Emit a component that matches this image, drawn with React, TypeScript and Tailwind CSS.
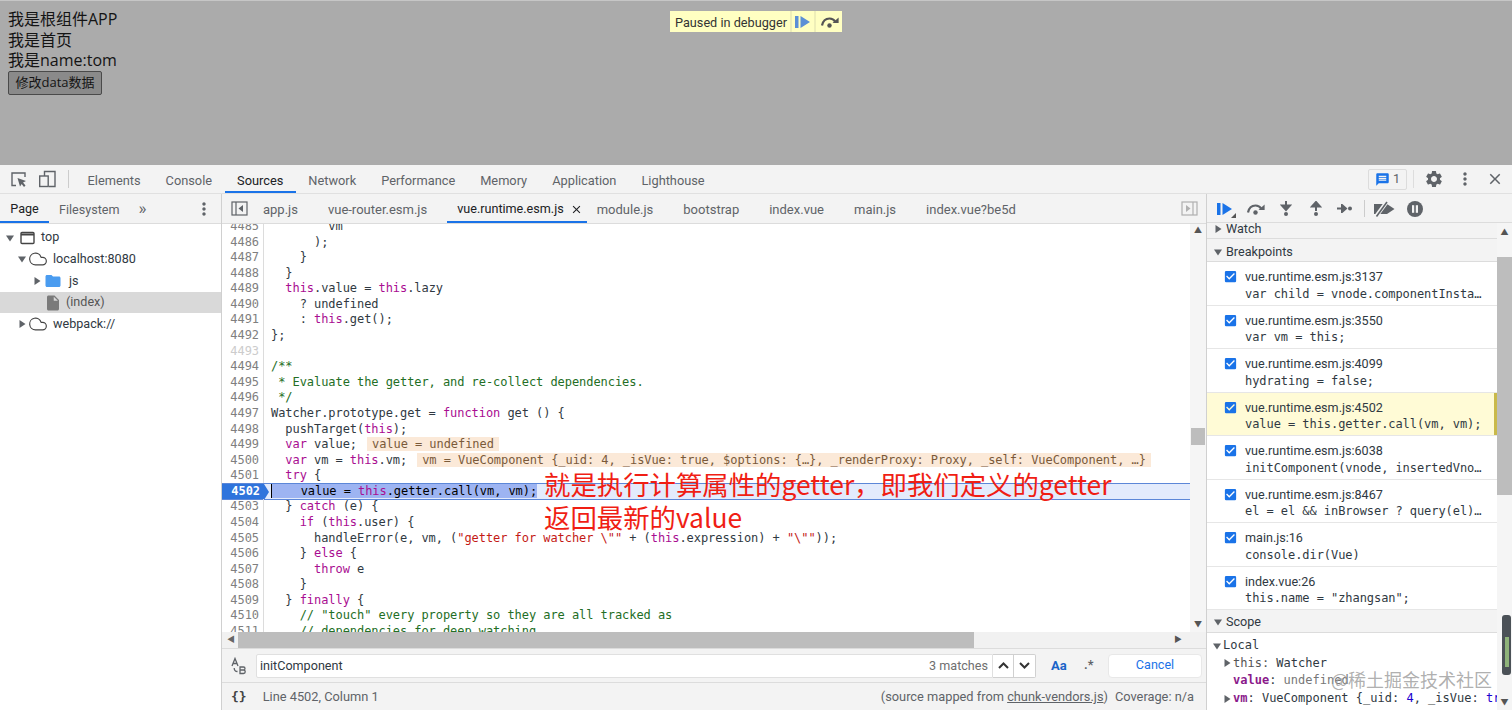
import React from "react";
import { MdSettings, MdMoreVert, MdClose, MdFolder, MdInsertDriveFile, MdMessage, MdCheckBox } from "react-icons/md";
import { Cloud } from "lucide-react";

const ui = "font-['Roboto','Noto_Sans_CJK_SC',sans-serif]";
const mono = "font-['DejaVu_Sans_Mono',monospace]";

type T = [string, string?];
const K = "text-[#a90d91]";
const C = "text-[#236e25]";
const S = "text-[#c41a16]";

const code: [number, T[]][] = [
  [4485, [["        vm"]]],
  [4486, [["      );"]]],
  [4487, [["    }"]]],
  [4488, [["  }"]]],
  [4489, [["  "], ["this", K], [".value = "], ["this", K], [".lazy"]]],
  [4490, [["    ? undefined"]]],
  [4491, [["    : "], ["this", K], [".get();"]]],
  [4492, [["};"]]],
  [4493, [[""]]],
  [4494, [["/**", C]]],
  [4495, [[" * Evaluate the getter, and re-collect dependencies.", C]]],
  [4496, [[" */", C]]],
  [4497, [["Watcher.prototype.get = "], ["function", K], [" get () {"]]],
  [4498, [["  pushTarget("], ["this", K], [");"]]],
  [4499, [["  "], ["var", K], [" value;"]]],
  [4500, [["  "], ["var", K], [" vm = "], ["this", K], [".vm;"]]],
  [4501, [["  "], ["try", K], [" {"]]],
  [4502, [["    value = "], ["this", K], [".getter.call(vm, vm);"]]],
  [4503, [["  } "], ["catch", K], [" (e) {"]]],
  [4504, [["    "], ["if", K], [" ("], ["this", K], [".user) {"]]],
  [4505, [["      handleError(e, vm, ("], ["\"getter for watcher \\\"\"", S], [" + ("], ["this", K], [".expression) + "], ["\"\\\"\"", S], ["));"]]],
  [4506, [["    } "], ["else", K], [" {"]]],
  [4507, [["      "], ["throw", K], [" e"]]],
  [4508, [["    }"]]],
  [4509, [["  } "], ["finally", K], [" {"]]],
  [4510, [["    // \"touch\" every property so they are all tracked as", C]]],
  [4511, [["    // dependencies for deep watching", C]]],
];

const Tri = ({ down, className = "" }: { down?: boolean; className?: string }) => (
  <svg width="8" height="8" viewBox="0 0 8 8" className={`shrink-0 ${className}`}>
    <path d={down ? "M0 1.5H8L4 7.5Z" : "M1.5 0V8L7.5 4Z"} fill="#5f6368" />
  </svg>
);

const Tab = ({ label, active }: { label: string; active?: boolean }) => (
  <div className={`h-full flex items-center px-[12.5px] pt-[6px] text-[12.8px] border-b-2 ${active ? "border-[#1a73e8] text-[#202124]" : "border-transparent text-[#5f6368]"}`}>{label}</div>
);

const FileTab = ({ label, active }: { label: string; active?: boolean }) => (
  <div className={`h-full flex items-center shrink-0 pt-[4px] border-b-2 ${active ? "border-[#1a73e8] text-[#202124] text-[12.6px] pl-[10px] pr-[4px] gap-[6px] -mr-[10px]" : "border-transparent text-[#5f6368] px-[10px]"}`}>
    {label}
    {active && <MdClose size={13} className="text-[#202124]" />}
  </div>
);

const Resume = ({ c = "#1a73e8" }: { c?: string }) => (
  <svg width="16" height="14" viewBox="0 0 16 14"><path d="M0 1H3.5V13H0ZM5.5 1L15 7L5.5 13Z" fill={c} /></svg>
);
const StepOver = ({ c = "#5f6368" }: { c?: string }) => (
  <svg width="19" height="12" viewBox="0 0 19 12"><path d="M2 9.5C3 4.5 6.5 2.5 9.5 2.5C12 2.5 14 3.6 15.2 5.6" fill="none" stroke={c} strokeWidth="2.2" /><path d="M12.5 7H18.6V1.5Z" fill={c} /><circle cx="9.5" cy="9.5" r="2.2" fill={c} /></svg>
);

const bps: [string, string, boolean?][] = [
  ["vue.runtime.esm.js:3137", "var child = vnode.componentInsta…"],
  ["vue.runtime.esm.js:3550", "var vm = this;"],
  ["vue.runtime.esm.js:4099", "hydrating = false;"],
  ["vue.runtime.esm.js:4502", "value = this.getter.call(vm, vm);", true],
  ["vue.runtime.esm.js:6038", "initComponent(vnode, insertedVno…"],
  ["vue.runtime.esm.js:8467", "el = el && inBrowser ? query(el)…"],
  ["main.js:16", "console.dir(Vue)"],
  ["index.vue:26", 'this.name = "zhangsan";'],
];

const Row = ({ children, cls = "" }: { children: React.ReactNode; cls?: string }) => (
  <div className={`h-[21.6px] flex items-center whitespace-nowrap ${cls}`}>{children}</div>
);

export default function App() {
  return (
    <div className={`w-[1512px] h-[710px] overflow-hidden flex flex-col bg-white text-[12.6px] ${ui}`}>
      {/* Page */}
      <div className="h-[165px] shrink-0 bg-[#ababab] border-t border-[#c6c6c6] relative pl-2 pt-[8px] text-[16px] leading-[20.6px] text-[#141414] font-['Open_Sans','Noto_Sans_CJK_SC',sans-serif]">
        <div>我是根组件APP</div>
        <div>我是首页</div>
        <div>我是name:tom</div>
        <button className="w-[94px] h-[24px] bg-[#8a8a8a] border border-[#4a4a4a] rounded-[2px] text-[13px] text-[#141414] flex items-center justify-center">修改data数据</button>
        <div className={`absolute left-[670px] top-[10px] h-[21px] w-[172px] bg-[#ffffc2] flex items-center text-[12.7px] text-[#333] ${ui}`}>
          <span className="w-[120px] pl-[5px] pt-[3px] whitespace-nowrap">Paused in debugger</span>
          <span className="w-[26px] h-full border-x-2 border-[#eeeeb8] flex items-center justify-center"><Resume c="#5b8fd6" /></span>
          <span className="w-[26px] h-full flex items-center justify-center"><StepOver c="#555" /></span>
        </div>
      </div>

      {/* Main tab bar */}
      <div className="h-[29px] shrink-0 bg-[#f3f3f3] border-b border-[#e0e0e0] flex items-center">
        <div className="w-[68px] h-full flex items-center pl-[11px] gap-[13px] shrink-0">
          <svg width="15" height="15" viewBox="0 0 15 15" fill="none"><path d="M5 13.5H1V1H14V5" stroke="#5f6368" strokeWidth="1.4" /><path d="M6.5 6L15 9L12 10.5L14.5 13.5L13 15L10.7 12L9 14.5Z" fill="#5f6368" /></svg>
          <svg width="17" height="18" viewBox="0 0 17 18" fill="none"><path d="M5.5 6V1.5H16V16.5H10" stroke="#5f6368" strokeWidth="1.4" /><rect x="0.7" y="6" width="8.5" height="10.5" stroke="#5f6368" strokeWidth="1.4" /></svg>
        </div>
        <div className="w-px h-[18px] bg-[#ccc] shrink-0 mr-[6px]" />
        <Tab label="Elements" />
        <Tab label="Console" />
        <Tab label="Sources" active />
        <Tab label="Network" />
        <Tab label="Performance" />
        <Tab label="Memory" />
        <Tab label="Application" />
        <Tab label="Lighthouse" />
        <div className="ml-auto flex items-center h-full shrink-0">
          <div className="w-[39px] h-[21px] border border-[#dcdcdc] rounded-[2px] flex items-center justify-center gap-[3px] text-[#5f6368]">
            <MdMessage size={15} className="text-[#1a73e8]" /> 1
          </div>
          <div className="w-px h-[18px] bg-[#ddd] mx-[6px]" />
          <MdSettings size={20} className="text-[#5f6368] ml-[4px]" />
          <MdMoreVert size={20} className="text-[#5f6368] ml-[11px]" />
          <MdClose size={18} className="text-[#5f6368] ml-[11px] mr-[8px]" />
        </div>
      </div>

      {/* Body */}
      <div className="flex-1 min-h-0 flex">
        {/* Navigator */}
        <div className="w-[222px] shrink-0 border-r border-[#d0d0d0] flex flex-col">
          <div className="h-[30px] shrink-0 bg-[#f3f3f3] border-b border-[#dcdcdc] flex items-center relative text-[#5f6368]">
            <div className="w-[49px] h-full flex items-center justify-center pt-[3px] border-b-2 border-[#1a73e8] text-[#202124]">Page</div>
            <span className="ml-[10px] pt-[3px]">Filesystem</span>
            <span className="ml-[19px] text-[17px]">»</span>
            <MdMoreVert size={20} className="ml-auto mr-[7px] mt-[1px]" />
          </div>
          <div className="pt-[3px] text-[#303942]">
            <Row cls="pl-[6px]"><Tri down /><svg width="16" height="14" viewBox="0 0 16 14" fill="none" className="ml-[6px]"><rect x="1" y="1.5" width="13" height="11" rx="1" stroke="#444" strokeWidth="1.4" /><path d="M1 3.5H14" stroke="#444" strokeWidth="2" /></svg><span className="ml-[5px]">top</span></Row>
            <Row cls="pl-[18px]"><Tri down /><Cloud size={20} strokeWidth={1.4} className="text-[#444] ml-[2px]" /><span className="ml-[5px]">localhost:8080</span></Row>
            <Row cls="pl-[33px]"><Tri /><MdFolder size={18} className="text-[#4a9cf0] ml-[3px]" /><span className="ml-[7px]">js</span></Row>
            <Row cls="pl-[44px] bg-[#d9d9d9]"><MdInsertDriveFile size={18} className="text-[#7a7a7a]" /><span className="ml-[4px] text-[#555]">(index)</span></Row>
            <Row cls="pl-[18px]"><Tri /><Cloud size={20} strokeWidth={1.4} className="text-[#444] ml-[2px]" /><span className="ml-[5px]">webpack://</span></Row>
          </div>
        </div>

        {/* Editor */}
        <div className="w-[985px] shrink-0 border-r border-[#d0d0d0] flex flex-col min-w-0">
          <div className="h-[30px] shrink-0 bg-[#f3f3f3] border-b border-[#dcdcdc] flex items-center gap-[10px] text-[13px] text-[#5f6368] whitespace-nowrap">
            <div className="w-[21px] pl-[9px] shrink-0">
              <svg width="17" height="15" viewBox="0 0 17 15" fill="none" className="max-w-none"><rect x="1" y="1" width="15" height="13" stroke="#5f6368" strokeWidth="1.2" /><path d="M5 1V14" stroke="#5f6368" strokeWidth="1.2" /><path d="M12 4V11L7.5 7.5Z" fill="#5f6368" /></svg>
            </div>
            <FileTab label="app.js" />
            <FileTab label="vue-router.esm.js" />
            <FileTab label="vue.runtime.esm.js" active />
            <FileTab label="module.js" />
            <FileTab label="bootstrap" />
            <FileTab label="index.vue" />
            <FileTab label="main.js" />
            <FileTab label="index.vue?be5d" />
            <div className="ml-auto mr-[8px] shrink-0">
              <svg width="17" height="15" viewBox="0 0 17 15" fill="none"><rect x="1" y="1" width="15" height="13" stroke="#b0b0b0" strokeWidth="1.2" /><path d="M12 1V14" stroke="#b0b0b0" strokeWidth="1.2" /><path d="M5 4V11L9.5 7.5Z" fill="#b0b0b0" /></svg>
            </div>
          </div>

          <div className="flex-1 min-h-0 flex">
            {/* Code */}
            <div className={`flex-1 min-w-0 overflow-hidden relative text-[12px] leading-[15.58px] tracking-[-0.06px] ${mono}`}>
              <div className="-mt-[5px]">
                {code.map(([n, toks]) => {
                  const hit = n === 4502;
                  return (
                    <div key={n} className={`h-[15.58px] flex whitespace-pre relative ${hit ? "bg-[#e3ebfc] outline outline-1 outline-[#5c87d8]" : ""}`}>
                      <div className={`w-[42px] shrink-0 pr-[4px] text-right relative ${hit ? "bg-[#2f74dc] text-white font-bold" : n === 4493 ? "text-[#ccc] border-r border-[#dcdcdc]" : "text-[#7f7f7f] border-r border-[#dcdcdc]"}`}>
                        {n}
                        {hit && <span className="absolute -right-[5px] top-0 w-0 h-0 border-y-[8px] border-y-transparent border-l-[5px] border-l-[#2f74dc]" />}
                      </div>
                      <div className={`pl-[7px] ${hit ? "" : "text-[#303942]"}`}>
                        {hit ? (
                          <span className="bg-[#9db4f2] border-l border-black">
                            {toks.map(([t, c], i) => <span key={i} className={c}>{t}</span>)}
                          </span>
                        ) : (
                          toks.map(([t, c], i) => <span key={i} className={c}>{t}</span>)
                        )}
                        {n === 4499 && <span className="ml-[10px] bg-[#fbe9d8] text-[#7a5a3a] px-[5px]">value = undefined</span>}
                        {n === 4500 && <span className="ml-[10px] bg-[#fbe9d8] text-[#7a5a3a] px-[5px]">{"vm = VueComponent {_uid: 4, _isVue: true, $options: {…}, _renderProxy: Proxy, _self: VueComponent, …}"}</span>}
                      </div>
                    </div>
                  );
                })}
              </div>
              <div className="absolute left-[322px] top-[243px] w-[640px] text-[26.4px] leading-[33px] tracking-normal text-[#f01e14] font-['Noto_Sans_CJK_SC',sans-serif]">
                <div className="whitespace-nowrap">就是执行计算属性的getter，即我们定义的getter</div>
                <div>返回最新的value</div>
              </div>
            </div>
            {/* V scrollbar */}
            <div className="w-[16px] shrink-0 bg-[#f5f5f5] flex flex-col items-center relative">
              <span className="text-[8px] text-[#555] leading-[14px]">▲</span>
              <div className="absolute top-[204px] left-[1px] w-[14px] h-[17px] bg-[#bdbdbd]" />
              <span className="mt-auto text-[8px] text-[#555] leading-[14px]">▼</span>
            </div>
          </div>

          {/* H scrollbar */}
          <div className="h-[16px] shrink-0 bg-[#f1f1f1] flex items-center relative">
            <span className="ml-[5px] text-[8px] text-[#666]">◀</span>
            <div className="absolute left-[16px] w-[736px] h-full bg-[#bdbdbd]" />
            <span className="ml-auto mr-[24px] text-[8px] text-[#555]">▶</span>
          </div>

          {/* Search */}
          <div className="h-[34px] shrink-0 bg-[#f3f3f3] border-t border-[#dcdcdc] flex items-center">
            <div className="w-[34px] h-full flex items-center justify-center text-[#5f6368]">
              <svg width="16" height="18" viewBox="0 0 16 18" fill="none">
                <path d="M1 9L4 1.5L7 9M2 6.5H6" stroke="#5f6368" strokeWidth="1.3" />
                <path d="M3.2 11C3.2 13.5 4.5 14.5 6.5 14.5" stroke="#5f6368" strokeWidth="1.3" />
                <path d="M9 10H12.5C14.5 10 14.5 13 12.5 13C14.8 13 14.8 16.5 12.5 16.5H9V10ZM9 13H12.5" stroke="#5f6368" strokeWidth="1.3" />
              </svg>
            </div>
            <div className="w-[737px] h-[24px] bg-white border border-[#e0e0e0] rounded-l-[2px] flex items-center pl-[3px] pr-[4px] pt-[2px] text-[#303942]">
              initComponent
              <span className="ml-auto text-[#6f6f6f]">3 matches</span>
            </div>
            <div className="w-[21px] h-[24px] bg-white border-y border-r border-[#d0d0d0] flex items-center justify-center">
              <svg width="11" height="7" viewBox="0 0 11 7" fill="none"><path d="M1 6L5.5 1.5L10 6" stroke="#333" strokeWidth="2" /></svg>
            </div>
            <div className="w-[22px] h-[24px] bg-white border-y border-r border-[#d0d0d0] rounded-r-[2px] flex items-center justify-center">
              <svg width="11" height="7" viewBox="0 0 11 7" fill="none"><path d="M1 1L5.5 5.5L10 1" stroke="#333" strokeWidth="2" /></svg>
            </div>
            <span className="ml-[15px] font-bold text-[#1a63c8] text-[13px] w-[16px]">Aa</span>
            <span className="ml-[17px] text-[#5f6368] font-bold w-[8px]">.*</span>
            <div className="ml-[16px] w-[94px] h-[24px] bg-white border border-[#e8e8e8] rounded-[4px] flex items-center justify-center text-[#1a73e8]">Cancel</div>
          </div>

          {/* Status */}
          <div className="h-[28px] shrink-0 bg-[#f3f3f3] border-t border-[#dcdcdc] flex items-center text-[#5f6368] text-[12.8px] whitespace-nowrap">
            <span className={`ml-[9px] font-bold text-[13px] text-[#444] ${mono}`}>{"{}"}</span>
            <span className="ml-[16px] pt-[1px]">Line 4502, Column 1</span>
            <span className="ml-auto pt-[1px]">(source mapped from <span className="underline">chunk-vendors.js</span>)</span>
            <span className="ml-[7px] mr-[12px] pt-[1px]">Coverage: n/a</span>
          </div>
        </div>

        {/* Debugger */}
        <div className="flex-1 min-w-0 flex flex-col relative bg-white">
          <div className="h-[29px] shrink-0 bg-[#f3f3f3] border-b border-[#dcdcdc] flex items-center pt-[1px]">
            <div className="ml-[10px] relative"><Resume /><span className="absolute -right-[3px] -bottom-[2px] w-0 h-0 border-l-[5px] border-l-transparent border-b-[5px] border-b-[#555]" /></div>
            <div className="ml-[13px]"><StepOver /></div>
            <svg width="12" height="15" viewBox="0 0 12 15" className="ml-[15px]"><path d="M6 0V6M2 4.5L6 9L10 4.5Z" stroke="#5f6368" strokeWidth="2" fill="#5f6368" /><circle cx="6" cy="13" r="2" fill="#5f6368" /></svg>
            <svg width="12" height="15" viewBox="0 0 12 15" className="ml-[18px]"><path d="M6 10V4M2 5.5L6 1L10 5.5Z" stroke="#5f6368" strokeWidth="2" fill="#5f6368" /><circle cx="6" cy="13" r="2" fill="#5f6368" /></svg>
            <svg width="15" height="9" viewBox="0 0 15 9" className="ml-[15px]"><path d="M0 4.5H6M5 1L9 4.5L5 8Z" stroke="#5f6368" strokeWidth="2" fill="#5f6368" /><circle cx="13" cy="4.5" r="2" fill="#5f6368" /></svg>
            <div className="w-px h-[17px] bg-[#ccc] ml-[12px]" />
            <svg width="21" height="16" viewBox="0 0 21 16" className="ml-[9px]">
              <path d="M0 3H13L20.5 8L13 13H0Z" fill="#5f6368" />
              <path d="M2 15.5L13 0.5" stroke="#f3f3f3" strokeWidth="4" />
              <path d="M2.5 15.5L13 1" stroke="#5f6368" strokeWidth="1.6" />
            </svg>
            <svg width="16" height="16" viewBox="0 0 16 16" className="ml-[12px]"><circle cx="8" cy="8" r="8" fill="#5f6368" /><rect x="5" y="4.2" width="2.2" height="7.6" fill="#f3f3f3" /><rect x="8.8" y="4.2" width="2.2" height="7.6" fill="#f3f3f3" /></svg>
          </div>

          <div className="flex-1 min-h-0 flex">
            <div className="flex-1 min-w-0 overflow-hidden">
              <div className="h-[16px] bg-[#f3f3f3] border-b border-[#dcdcdc] flex items-center pl-[7px] gap-[4px] text-[#303942] overflow-hidden"><Tri className="-mt-[3px]" /><span className="-mt-[3px]">Watch</span></div>
              <div className="h-[23px] bg-[#f3f3f3] border-b border-[#dcdcdc] flex items-center pl-[7px] pt-[4px] gap-[4px] text-[#303942]"><Tri down />Breakpoints</div>
              {bps.map(([a, b, hl]) => (
                <div key={a} className={`h-[43.5px] border-b border-[#e6e6e6] flex pl-[16px] pt-[6px] relative ${hl ? "bg-[#fffbd6]" : ""}`}>
                  <MdCheckBox size={15} className="text-[#1a73e8] mt-[1px] shrink-0" />
                  <div className="ml-[7px] whitespace-nowrap">
                    <div className="text-[#303942] leading-[17px]">{a}</div>
                    <div className={`text-[12px] leading-[17px] mt-[0.5px] text-[#303942] tracking-[-0.06px] ${mono}`}>{b}</div>
                  </div>
                  {hl && <div className="absolute right-0 top-0 bottom-0 w-[3px] bg-[#c9b94a]" />}
                </div>
              ))}
              <div className="h-[23px] bg-[#f3f3f3] border-b border-[#dcdcdc] flex items-center pl-[7px] pt-[2px] gap-[4px] text-[#303942]"><Tri down />Scope</div>
              <div className={`text-[12px] leading-[17.6px] whitespace-nowrap pt-[4px] text-[#303942] ${mono}`}>
                <div className="flex items-center pl-[6px] gap-[2px]"><Tri down /><span>Local</span></div>
                <div className="flex items-center pl-[16px] gap-[2px]"><Tri /><span><span className="text-[#555]">this:</span> Watcher</span></div>
                <div className="pl-[26px]"><span className="text-[#8b1a8b] font-bold">value</span>: <span className="text-[#777]">undefined</span></div>
                <div className="flex items-center pl-[16px] gap-[2px]"><Tri /><span><span className="text-[#8b1a8b] font-bold">vm</span>: VueComponent {"{"}_uid: <span className="text-[#1c00cf]">4</span>, _isVue: <span className="text-[#1c00cf]">true</span></span></div>
              </div>
            </div>
            {/* Right scrollbar */}
            <div className="w-[15px] shrink-0 bg-[#f5f5f5] flex flex-col items-center relative">
              <span className="text-[8px] text-[#555] leading-[20px]">▲</span>
              <div className="absolute top-[34px] left-0 right-0 h-[238px] bg-[#bdbdbd]" />
              <span className="mt-auto text-[8px] text-[#555] leading-[14px]">▼</span>
            </div>
          </div>
          <div className="absolute right-[1px] top-[421px] w-[9px] h-[60px] bg-[#4b5157] rounded-[3px] flex items-end justify-center pb-[8px]">
            <div className="w-[4px] h-[30px] bg-[#8fb37a]" />
          </div>
          <div className="absolute left-[124px] top-[473px] text-[18px] leading-[24px] text-[#9a9a9a]/80 whitespace-nowrap font-['Noto_Sans_CJK_SC',sans-serif]">@稀土掘金技术社区</div>
        </div>
      </div>
    </div>
  );
}
